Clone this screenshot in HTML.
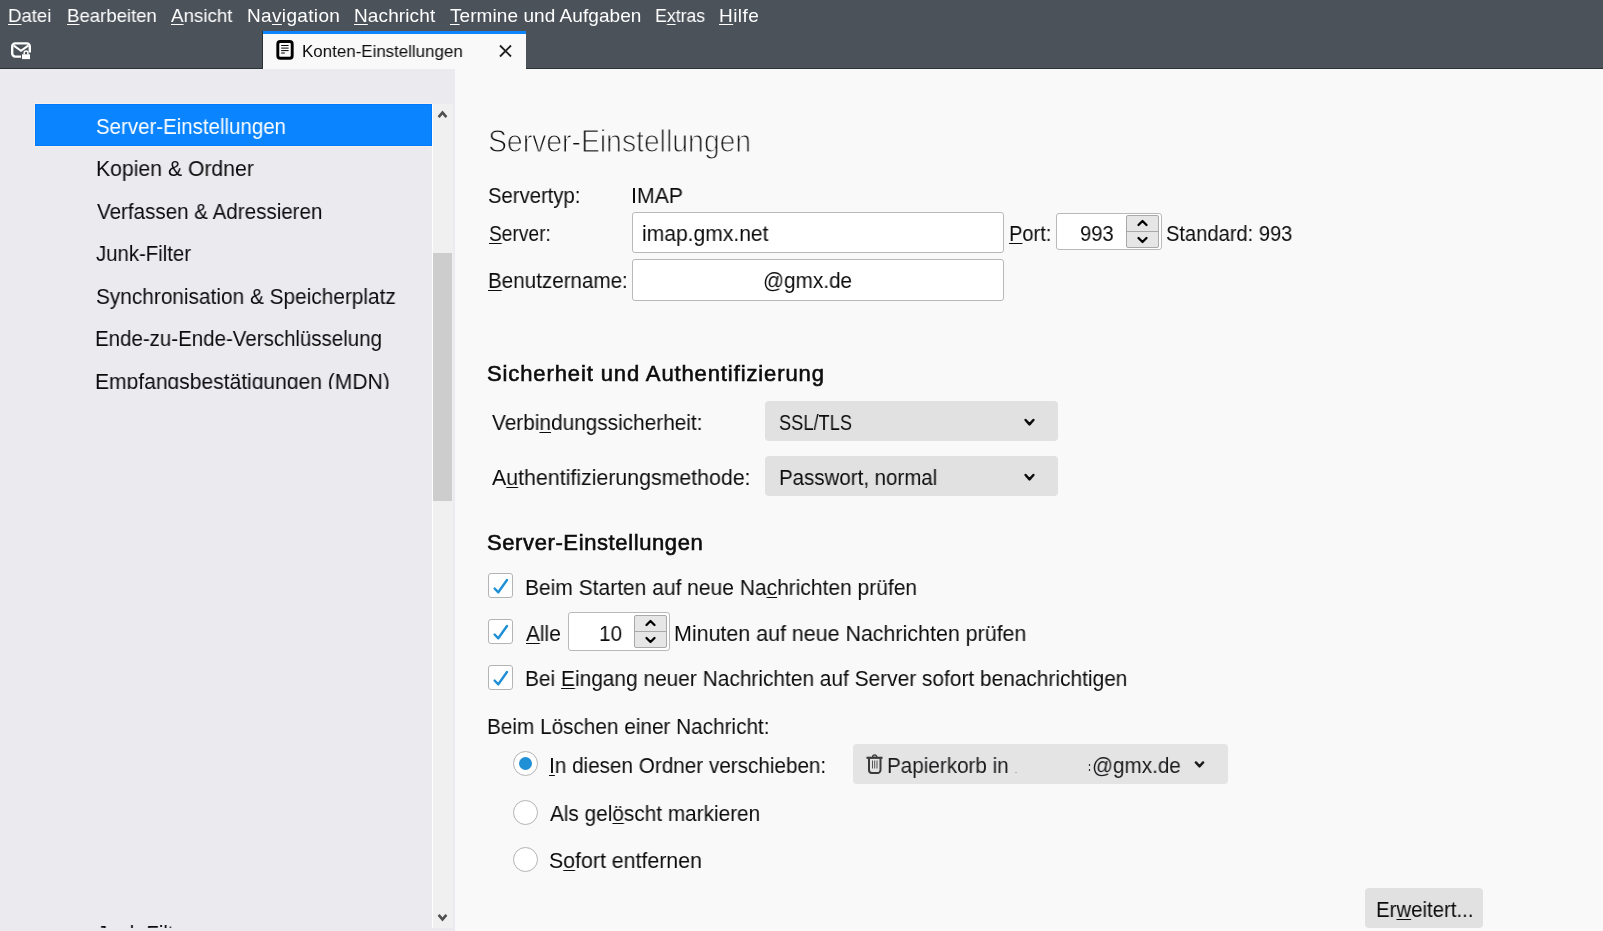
<!DOCTYPE html>
<html><head><meta charset="utf-8">
<style>
html,body{margin:0;padding:0;}
body{width:1603px;height:931px;overflow:hidden;position:relative;background:#f9f9fa;font-family:"Liberation Sans",sans-serif;}
.abs{position:absolute;}
.t{position:absolute;white-space:nowrap;will-change:transform;}
u{text-decoration:underline;text-decoration-thickness:1px;text-underline-offset:2px;}
#dark{left:0;top:0;width:1603px;height:69px;background:#4b5259;}
#darkline{left:0;top:68px;width:1603px;height:1px;background:#2c3337;}
#darkv{left:262px;top:31px;width:1px;height:38px;background:#2c3337;}
#tabbg{left:263px;top:31px;width:263px;height:38px;background:#f9f9fa;}
#tabline{left:263px;top:31px;width:263px;height:3px;background:#0a84ff;}
#side{left:0;top:69px;width:455px;height:862px;background:#ebeaef;}
#selo{left:34px;top:103px;width:399px;height:44px;background:#f9f0ec;}
#sel{left:35px;top:104px;width:397px;height:42px;background:#0a84ff;box-shadow:inset 1px 1px 0 #007aff, inset -1px -1px 0 #007aff;}
#sbw{left:432px;top:104px;width:1px;height:824px;background:#fdfdfd;}
#sbt{left:433px;top:104px;width:20px;height:824px;background:#f0f0f0;}
#thumb{left:433px;top:253px;width:19px;height:248px;background:#cdcdcd;}
.inp{position:absolute;background:#fff;border:1px solid #b9b9ba;border-radius:3px;box-sizing:border-box;}
.spinb{position:absolute;background:#e6e6e7;border:1px solid #a9a9aa;border-radius:2px;box-sizing:border-box;}
.dd{position:absolute;background:#e1e1e2;border-radius:4px;}
.cb{position:absolute;background:#fff;border:1px solid #b4b4b5;border-radius:3px;box-sizing:border-box;width:25px;height:25px;}
.rd{position:absolute;background:#fff;border:1px solid #b4b4b5;border-radius:50%;box-sizing:border-box;width:25px;height:25px;}
svg{position:absolute;overflow:visible;}
</style></head><body>
<div class="abs" id="dark"></div>
<div class="abs" id="darkline"></div>
<div class="abs" id="darkv"></div>
<div class="abs" id="tabbg"></div>
<div class="abs" id="tabline"></div>
<div class="abs" id="side"></div>
<div class="abs" id="selo"></div>
<div class="abs" id="sel"></div>
<div class="abs" id="sbw"></div>
<div class="abs" id="sbt"></div>
<div class="abs" id="thumb"></div>

<!-- mail lock icon -->
<svg style="left:0;top:0" width="40" height="69">
 <path d="M21 56.6 H15.2 a3 3 0 0 1 -3 -3 V46.4 a3 3 0 0 1 3 -3 H26.8 a3 3 0 0 1 3 3 V52.6" fill="none" stroke="#fff" stroke-width="2.4"/>
 <path d="M13.8 45.6 L21 50.8 L28.2 45.6" fill="none" stroke="#fff" stroke-width="2"/>
 <rect x="22" y="54.3" width="8" height="4.8" fill="#fff"/>
 <path d="M24.2 54.6 V52.8 a1.85 1.85 0 0 1 3.7 0 V54.6" fill="none" stroke="#fff" stroke-width="1.5"/>
</svg>
<!-- tab doc icon -->
<svg style="left:0;top:0" width="300" height="69">
 <rect x="277.8" y="41.5" width="14.4" height="16.8" rx="2.5" fill="none" stroke="#000" stroke-width="2.9"/>
 <path d="M281.2 45.5 H288.6 M281.2 48.1 H288.6 M281.2 50.6 H288.6 M281.2 53 H284.8" stroke="#000" stroke-width="1"/>
</svg>
<!-- tab close -->
<svg style="left:0;top:0" width="530" height="69">
 <path d="M500 45.5 L511 56.5 M511 45.5 L500 56.5" stroke="#202020" stroke-width="1.8"/>
</svg>
<!-- scrollbar arrows -->
<svg style="left:0;top:0" width="460" height="931">
 <path d="M438.6 117.2 L442.5 112.6 L446.4 117.2" fill="none" stroke="#505050" stroke-width="2.6"/>
 <path d="M438.6 914.8 L442.5 919.4 L446.4 914.8" fill="none" stroke="#505050" stroke-width="2.6"/>
</svg>

<!-- inputs -->
<div class="inp" style="left:632px;top:212px;width:372px;height:41px"></div>
<div class="inp" style="left:632px;top:259px;width:372px;height:42px"></div>
<div class="inp" style="left:1056px;top:213px;width:106px;height:37px"></div>
<div class="spinb" style="left:1126px;top:215px;width:33px;height:33px"></div>
<div class="abs" style="left:1127px;top:231px;width:31px;height:1px;background:#a9a9aa"></div>
<svg style="left:0;top:0" width="1200" height="300">
 <path d="M1138.5 225 L1142.5 221 L1146.5 225" fill="none" stroke="#000" stroke-width="2.3" stroke-linecap="round" stroke-linejoin="round"/>
 <path d="M1138.5 238 L1142.5 242 L1146.5 238" fill="none" stroke="#000" stroke-width="2.3" stroke-linecap="round" stroke-linejoin="round"/>
</svg>

<!-- dropdowns -->
<div class="dd" style="left:765px;top:401px;width:293px;height:40px"></div>
<div class="dd" style="left:765px;top:456px;width:293px;height:40px"></div>
<svg style="left:0;top:0" width="1100" height="520">
 <path d="M1025.6 420 L1029.5 424.3 L1033.4 420" fill="none" stroke="#0c0c0d" stroke-width="2.5" stroke-linecap="round" stroke-linejoin="round"/>
 <path d="M1025.6 475 L1029.5 479.3 L1033.4 475" fill="none" stroke="#0c0c0d" stroke-width="2.5" stroke-linecap="round" stroke-linejoin="round"/>
</svg>

<!-- checkboxes -->
<div class="cb" style="left:488px;top:573px"></div>
<div class="cb" style="left:488px;top:619px"></div>
<div class="cb" style="left:488px;top:665px"></div>
<svg style="left:0;top:0" width="520" height="700">
 <path d="M494.6 588.5 L498.3 592.3 L507 580" fill="none" stroke="#1f8fd6" stroke-width="2.4" stroke-linecap="round" stroke-linejoin="round"/>
 <path d="M494.6 634.5 L498.3 638.3 L507 626" fill="none" stroke="#1f8fd6" stroke-width="2.4" stroke-linecap="round" stroke-linejoin="round"/>
 <path d="M494.6 680.5 L498.3 684.3 L507 672" fill="none" stroke="#1f8fd6" stroke-width="2.4" stroke-linecap="round" stroke-linejoin="round"/>
</svg>
<!-- spin 2 -->
<div class="inp" style="left:568px;top:612px;width:102px;height:39px"></div>
<div class="spinb" style="left:634px;top:615px;width:33px;height:33px"></div>
<div class="abs" style="left:635px;top:631px;width:31px;height:1px;background:#a9a9aa"></div>
<svg style="left:0;top:0" width="700" height="700">
 <path d="M646.5 625 L650.5 621 L654.5 625" fill="none" stroke="#000" stroke-width="2.3" stroke-linecap="round" stroke-linejoin="round"/>
 <path d="M646.5 638 L650.5 642 L654.5 638" fill="none" stroke="#000" stroke-width="2.3" stroke-linecap="round" stroke-linejoin="round"/>
</svg>

<!-- radios -->
<div class="rd" style="left:513px;top:751px"></div>
<div class="rd" style="left:513px;top:800px"></div>
<div class="rd" style="left:513px;top:847px"></div>
<div class="abs" style="left:519px;top:757px;width:13px;height:13px;border-radius:50%;background:#1f8fd6"></div>

<!-- folder dropdown -->
<div class="dd" style="left:853px;top:744px;width:375px;height:40px;background:#e4e4e5"></div>
<svg style="left:0;top:0" width="1240" height="800">
 <path d="M866.5 757.8 H882.5" stroke="#3a3a3a" stroke-width="2.2"/>
 <path d="M872.6 757 a2.1 2.1 0 0 1 4.2 0" fill="#999" stroke="#3a3a3a" stroke-width="1.3"/>
 <path d="M869 758.5 V770 a3 3 0 0 0 3 3 H877.5 a3 3 0 0 0 3 -3 V758.5" fill="none" stroke="#3a3a3a" stroke-width="2"/>
 <path d="M872.5 760.5 V768.5 M874.7 760.5 V768.5 M877 760.5 V768.5" stroke="#555" stroke-width="1"/>
 <path d="M1016 772 v1" stroke="#888" stroke-width="1"/>
 <path d="M1089.5 764 v2 M1089.5 769 v2" stroke="#333" stroke-width="1.2"/>
 <path d="M1195.9 762.4 L1199.5 766.4 L1203.1 762.4" fill="none" stroke="#1b1b1d" stroke-width="2.4" stroke-linecap="round" stroke-linejoin="round"/>
</svg>

<!-- Erweitert button -->
<div class="dd" style="left:1365px;top:888px;width:118px;height:40px"></div>

<div class="t" id="m1" style="left:7.70px;top:5px;font-size:19px;line-height:21px;letter-spacing:0.000px;font-weight:normal;color:#fff;transform:scaleX(0.9762);transform-origin:1.00px 0;"><u>D</u>atei</div>
<div class="t" id="m2" style="left:66.70px;top:5px;font-size:19px;line-height:21px;letter-spacing:0.000px;font-weight:normal;color:#fff;transform:scaleX(0.9775);transform-origin:1.00px 0;"><u>B</u>earbeiten</div>
<div class="t" id="m3" style="left:171.10px;top:5px;font-size:19px;line-height:21px;letter-spacing:0.000px;font-weight:normal;color:#fff;transform:scaleX(0.9862);transform-origin:0.00px 0;"><u>A</u>nsicht</div>
<div class="t" id="m4" style="left:246.75px;top:5px;font-size:19px;line-height:21px;letter-spacing:0.342px;font-weight:normal;color:#fff;">Na<u>v</u>igation</div>
<div class="t" id="m5" style="left:353.60px;top:5px;font-size:19px;line-height:21px;letter-spacing:0.112px;font-weight:normal;color:#fff;"><u>N</u>achricht</div>
<div class="t" id="m6" style="left:450.30px;top:5px;font-size:19px;line-height:21px;letter-spacing:0.066px;font-weight:normal;color:#fff;"><u>T</u>ermine und Aufgaben</div>
<div class="t" id="m7" style="left:654.75px;top:5px;font-size:19px;line-height:21px;letter-spacing:0.000px;font-weight:normal;color:#fff;transform:scaleX(0.9298);transform-origin:1.00px 0;">E<u>x</u>tras</div>
<div class="t" id="m8" style="left:719.40px;top:5px;font-size:19px;line-height:21px;letter-spacing:0.463px;font-weight:normal;color:#fff;"><u>H</u>ilfe</div>
<div class="t" id="tab" style="left:302.24px;top:42px;font-size:17px;line-height:19px;letter-spacing:0.000px;font-weight:normal;color:#0c0c0d;transform:scaleX(0.9947);transform-origin:1.00px 0;">Konten-Einstellungen</div>
<div class="t" id="s1" style="left:95.51px;top:115px;font-size:21.5px;line-height:24px;letter-spacing:0.000px;font-weight:normal;color:#fff;transform:scaleX(0.9519);transform-origin:0.00px 0;">Server-Einstellungen</div>
<div class="t" id="s2" style="left:95.69px;top:157px;font-size:21.5px;line-height:24px;letter-spacing:0.000px;font-weight:normal;color:#0c0c0d;transform:scaleX(0.9858);transform-origin:1.00px 0;">Kopien &amp; Ordner</div>
<div class="t" id="s3" style="left:96.62px;top:200px;font-size:21.5px;line-height:24px;letter-spacing:0.000px;font-weight:normal;color:#0c0c0d;transform:scaleX(0.9574);transform-origin:0.00px 0;">Verfassen &amp; Adressieren</div>
<div class="t" id="s4" style="left:96.34px;top:242px;font-size:21.5px;line-height:24px;letter-spacing:0.000px;font-weight:normal;color:#0c0c0d;transform:scaleX(0.9464);transform-origin:0.00px 0;">Junk-Filter</div>
<div class="t" id="s5" style="left:95.75px;top:285px;font-size:21.5px;line-height:24px;letter-spacing:0.000px;font-weight:normal;color:#0c0c0d;transform:scaleX(0.9687);transform-origin:0.00px 0;">Synchronisation &amp; Speicherplatz</div>
<div class="t" id="s6" style="left:95.44px;top:327px;font-size:21.5px;line-height:24px;letter-spacing:0.000px;font-weight:normal;color:#0c0c0d;transform:scaleX(0.9526);transform-origin:1.00px 0;">Ende-zu-Ende-Verschlüsselung</div>
<div class="t" id="s7" style="left:95.44px;top:370px;font-size:21.5px;line-height:24px;letter-spacing:0.000px;font-weight:normal;color:#0c0c0d;transform:scaleX(0.9786);transform-origin:1.00px 0;clip-path:inset(0 0 5px 0)">Empfangsbestätigungen (MDN)</div>
<div class="t" id="s8" style="left:96.80px;top:922px;font-size:21.5px;line-height:24px;letter-spacing:0.000px;font-weight:normal;color:#0c0c0d;transform:scaleX(0.9402);transform-origin:0.00px 0;clip-path:inset(0 0 18px 0)">Junk-Filter</div>
<div class="t" id="title" style="left:488.45px;top:123px;font-size:32px;line-height:36px;letter-spacing:0.000px;font-weight:normal;color:#0c0c0d;transform:scaleX(0.8852);transform-origin:1.00px 0;-webkit-text-stroke:1.1px #f9f9fa">Server-Einstellungen</div>
<div class="t" id="c1" style="left:487.53px;top:184px;font-size:21.5px;line-height:24px;letter-spacing:0.000px;font-weight:normal;color:#0c0c0d;transform:scaleX(0.9428);transform-origin:0.00px 0;">Servertyp:</div>
<div class="t" id="c2" style="left:631.25px;top:184px;font-size:21.5px;line-height:24px;letter-spacing:0.000px;font-weight:normal;color:#0c0c0d;transform:scaleX(0.9878);transform-origin:1.00px 0;">IMAP</div>
<div class="t" id="c3" style="left:488.70px;top:222px;font-size:21.5px;line-height:24px;letter-spacing:0.000px;font-weight:normal;color:#0c0c0d;transform:scaleX(0.8918);transform-origin:0.00px 0;"><u>S</u>erver:</div>
<div class="t" id="c4" style="left:642.43px;top:222px;font-size:21.5px;line-height:24px;letter-spacing:0.000px;font-weight:normal;color:#0c0c0d;transform:scaleX(0.9798);transform-origin:1.00px 0;">imap.gmx.net</div>
<div class="t" id="c5" style="left:1008.60px;top:222px;font-size:21.5px;line-height:24px;letter-spacing:0.000px;font-weight:normal;color:#0c0c0d;transform:scaleX(0.9308);transform-origin:1.00px 0;"><u>P</u>ort:</div>
<div class="t" id="c6" style="left:1080.42px;top:222px;font-size:21.5px;line-height:24px;letter-spacing:0.000px;font-weight:normal;color:#0c0c0d;transform:scaleX(0.9321);transform-origin:1.00px 0;">993</div>
<div class="t" id="c7" style="left:1166.28px;top:222px;font-size:21.5px;line-height:24px;letter-spacing:0.000px;font-weight:normal;color:#0c0c0d;transform:scaleX(0.9354);transform-origin:0.00px 0;">Standard: 993</div>
<div class="t" id="c8" style="left:487.70px;top:269px;font-size:21.5px;line-height:24px;letter-spacing:0.000px;font-weight:normal;color:#0c0c0d;transform:scaleX(0.9581);transform-origin:1.00px 0;"><u>B</u>enutzername:</div>
<div class="t" id="c9" style="left:762.52px;top:269px;font-size:21.5px;line-height:24px;letter-spacing:0.000px;font-weight:normal;color:#0c0c0d;transform:scaleX(0.9641);transform-origin:1.00px 0;">@gmx.de</div>
<div class="t" id="h1" style="left:486.63px;top:361px;font-size:22px;line-height:25px;letter-spacing:0.885px;font-weight:normal;color:#0c0c0d;-webkit-text-stroke:0.6px #0c0c0d">Sicherheit und Authentifizierung</div>
<div class="t" id="c10" style="left:492.12px;top:411px;font-size:21.5px;line-height:24px;letter-spacing:0.000px;font-weight:normal;color:#0c0c0d;transform:scaleX(0.9678);transform-origin:0.00px 0;">Verbi<u>n</u>dungssicherheit:</div>
<div class="t" id="c11" style="left:778.81px;top:411px;font-size:21.5px;line-height:24px;letter-spacing:0.000px;font-weight:normal;color:#0c0c0d;transform:scaleX(0.8484);transform-origin:0.00px 0;">SSL/TLS</div>
<div class="t" id="c12" style="left:492.18px;top:466px;font-size:21.5px;line-height:24px;letter-spacing:0.000px;font-weight:normal;color:#0c0c0d;transform:scaleX(0.9922);transform-origin:0.00px 0;">A<u>u</u>thentifizierungsmethode:</div>
<div class="t" id="c13" style="left:778.69px;top:466px;font-size:21.5px;line-height:24px;letter-spacing:0.000px;font-weight:normal;color:#0c0c0d;transform:scaleX(0.9528);transform-origin:1.00px 0;">Passwort, normal</div>
<div class="t" id="h2" style="left:486.63px;top:530px;font-size:22px;line-height:25px;letter-spacing:0.607px;font-weight:normal;color:#0c0c0d;-webkit-text-stroke:0.6px #0c0c0d">Server-Einstellungen</div>
<div class="t" id="c14" style="left:524.94px;top:576px;font-size:21.5px;line-height:24px;letter-spacing:0.000px;font-weight:normal;color:#0c0c0d;transform:scaleX(0.9763);transform-origin:1.00px 0;">Beim Starten auf neue Na<u>c</u>hrichten prüfen</div>
<div class="t" id="c15" style="left:526.00px;top:622px;font-size:21.5px;line-height:24px;letter-spacing:0.000px;font-weight:normal;color:#0c0c0d;transform:scaleX(0.9701);transform-origin:0.00px 0;"><u>A</u>lle</div>
<div class="t" id="c16" style="left:598.89px;top:622px;font-size:21.5px;line-height:24px;letter-spacing:0.000px;font-weight:normal;color:#0c0c0d;transform:scaleX(0.9618);transform-origin:1.00px 0;">10</div>
<div class="t" id="c17" style="left:674.44px;top:622px;font-size:21.5px;line-height:24px;letter-spacing:0.000px;font-weight:normal;color:#0c0c0d;transform:scaleX(0.9960);transform-origin:1.00px 0;">Minuten auf neue Nachrichten prüfen</div>
<div class="t" id="c18" style="left:524.94px;top:667px;font-size:21.5px;line-height:24px;letter-spacing:0.000px;font-weight:normal;color:#0c0c0d;transform:scaleX(0.9710);transform-origin:1.00px 0;">Bei <u>E</u>ingang neuer Nachrichten auf Server sofort benachrichtigen</div>
<div class="t" id="c19" style="left:487.44px;top:715px;font-size:21.5px;line-height:24px;letter-spacing:0.000px;font-weight:normal;color:#0c0c0d;transform:scaleX(0.9648);transform-origin:1.00px 0;">Beim Löschen einer Nachricht:</div>
<div class="t" id="c20" style="left:549.00px;top:754px;font-size:21.5px;line-height:24px;letter-spacing:0.000px;font-weight:normal;color:#0c0c0d;transform:scaleX(0.9622);transform-origin:1.00px 0;"><u>I</u>n diesen Ordner verschieben:</div>
<div class="t" id="c21" style="left:549.68px;top:802px;font-size:21.5px;line-height:24px;letter-spacing:0.000px;font-weight:normal;color:#0c0c0d;transform:scaleX(0.9663);transform-origin:0.00px 0;">Als gel<u>ö</u>scht markieren</div>
<div class="t" id="c22" style="left:548.75px;top:849px;font-size:21.5px;line-height:24px;letter-spacing:0.000px;font-weight:normal;color:#0c0c0d;transform:scaleX(0.9916);transform-origin:0.00px 0;">S<u>o</u>fort entfernen</div>
<div class="t" id="c23" style="left:887.19px;top:754px;font-size:21.5px;line-height:24px;letter-spacing:0.000px;font-weight:normal;color:#1b1b1d;transform:scaleX(0.9599);transform-origin:1.00px 0;">Papierkorb in</div>
<div class="t" id="c24" style="left:1091.52px;top:754px;font-size:21.5px;line-height:24px;letter-spacing:0.000px;font-weight:normal;color:#1b1b1d;transform:scaleX(0.9616);transform-origin:1.00px 0;">@gmx.de</div>
<div class="t" id="btn" style="left:1375.69px;top:898px;font-size:21.5px;line-height:24px;letter-spacing:0.000px;font-weight:normal;color:#0c0c0d;transform:scaleX(0.9483);transform-origin:1.00px 0;">Er<u>w</u>eitert...</div>
</body></html>
